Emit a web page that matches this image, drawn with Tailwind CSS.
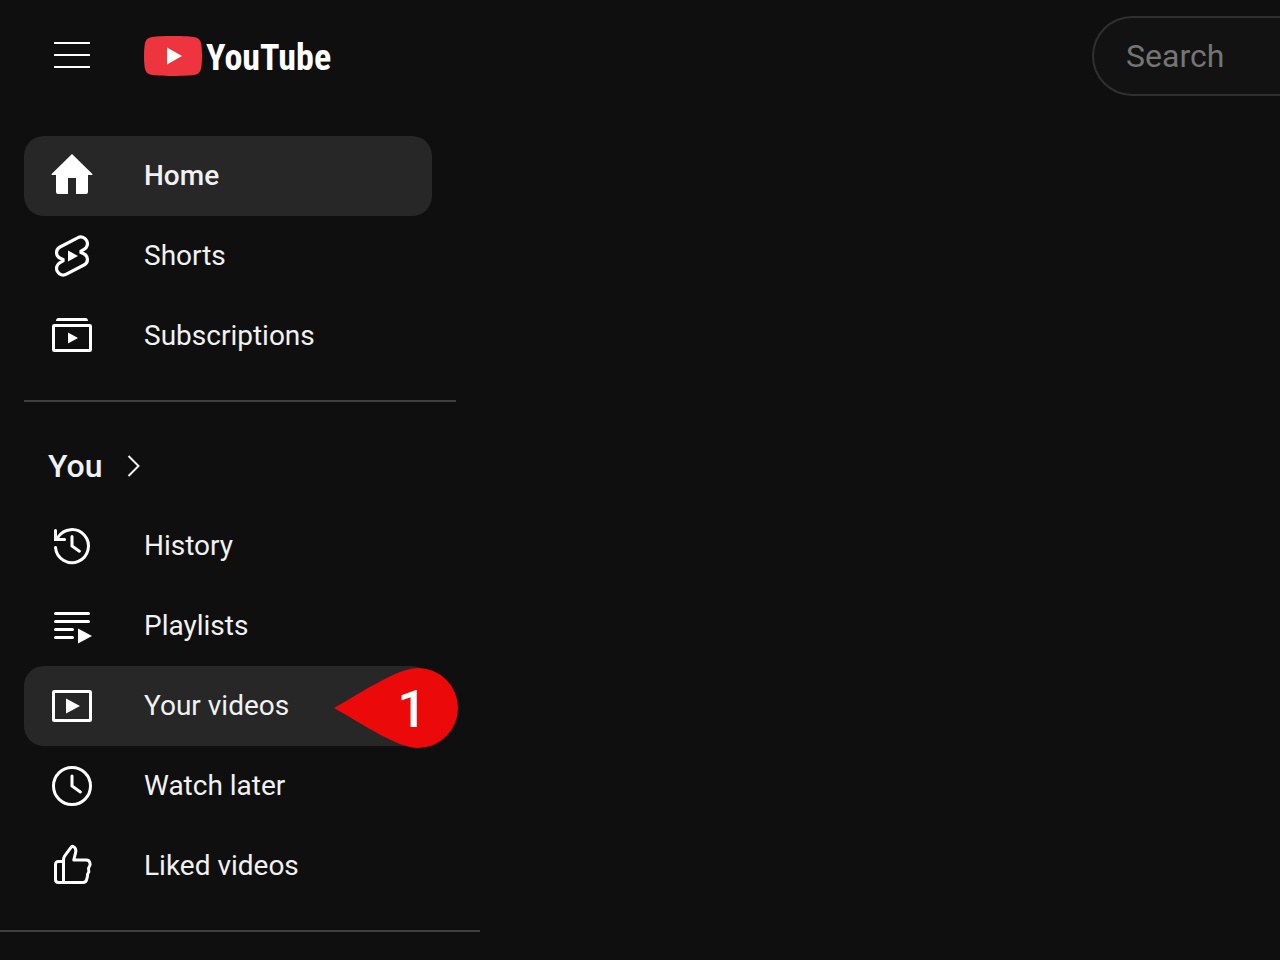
<!DOCTYPE html>
<html lang="en">
<head>
    <meta charset="UTF-8">
    <meta name="viewport" content="width=device-width, initial-scale=1.0">
    <title>YouTube</title>
    <script src="https://cdn.jsdelivr.net/npm/@tailwindcss/browser@4"></script>
</head>
<body class="min-h-screen bg-[#0f0f0f] font-['Roboto',sans-serif] text-[#f1f1f1] overflow-x-hidden">
    <header class="flex h-28 items-center justify-between">
        <div class="flex items-center gap-12 pl-12">
            <button type="button" aria-label="Menu" class="size-12">
                <svg class="size-12" viewBox="0 0 48 48" fill="#fff"><path d="M6 10h36v2H6zM6 22h36v2H6zM6 34h36v2H6z"/></svg>
            </button>
            <a href="#" class="flex items-center gap-1 text-white">
                <svg class="h-10 w-[58px]" viewBox="0 0 58 40">
                    <path fill="#ed343f" d="M29 0C40 0 48 .5 51 1.2 54.500 2 56.300 4 57 7c.7 3.500 1 8 1 13s-.3 9.500-1 13c-.7 3-2.500 5-6 5.800C48 39.500 40 40 29 40S10 39.500 7 38.800C3.500 38 1.700 36 1 33 .3 29.500 0 25 0 20S.3 10.500 1 7c.7-3 2.500-5 6-5.800C10 .5 18 0 29 0z"/>
                    <path fill="#fff" d="M23 11.500 38 20 23 28.500z"/>
                </svg>
                <span class="pt-1 font-['Roboto_Condensed','Liberation_Sans_Narrow',sans-serif] text-[36px] leading-10 font-bold">YouTube</span>
            </a>
        </div>
        <form>
            <input type="search" aria-label="Search" placeholder="Search" class="h-20 w-[188px] rounded-l-full border-2 border-r-0 border-[#303030] bg-[#121212] pl-8 text-[32px] outline-none placeholder:text-[#757575]">
        </form>
    </header>

    <nav class="w-[480px] border-b-2 border-[#3f3f3f] py-6 text-[28px] leading-10">
        <ul>
            <li class="pr-12 pl-6">
                <a href="#" class="flex h-20 items-center gap-12 rounded-[20px] bg-[#272727] pl-6 font-medium">
                    <svg class="size-12" viewBox="0 0 24 24" fill="#fff"><path d="M12 1 22.200 11a.3.3 0 0 1-.2.500H20V20a1 1 0 0 1-1 1h-5v-8h-4v8H5a1 1 0 0 1-1-1v-8.500H2a.3.3 0 0 1-.2-.5z"/></svg>
                    Home
                </a>
            </li>
            <li class="pr-12 pl-6">
                <a href="#" class="flex h-20 items-center gap-12 rounded-[20px] pl-6">
                    <svg class="size-12" viewBox="0 0 24 24" fill="none" stroke="#fff" stroke-width="1.6">
                        <path d="M6 7.500 14.800 2.900A3.300 3.300 0 0 1 18 8.700L16.500 9.600v.6L17.900 10.900A3.100 3.100 0 0 1 18 16.500L9.200 21.100A3.300 3.300 0 0 1 6 15.300L7.500 14.400v-.6L6.100 13.100A3.100 3.100 0 0 1 6 7.500z"/>
                        <path fill="#fff" stroke="none" d="m10 9.200 5 2.800-5 2.800z"/>
                    </svg>
                    Shorts
                </a>
            </li>
            <li class="pr-12 pl-6">
                <a href="#" class="flex h-20 items-center gap-12 rounded-[20px] pl-6">
                    <svg class="size-12" viewBox="0 0 24 24" fill="none" stroke="#fff" stroke-width="1.5" stroke-linejoin="round">
                        <rect x="2.750" y="6.750" width="18.500" height="12.500" rx=".4"/>
                        <path fill="#fff" stroke="none" d="M4 4.500C4 3.500 4.500 3 5.200 3h13.600c.7 0 1.200.5 1.200 1.500zM10 10.300l5 2.700-5 2.700z"/>
                    </svg>
                    Subscriptions
                </a>
            </li>
        </ul>

        <hr class="mx-6 my-6 border-t-2 border-[#3f3f3f]">

        <a href="#" class="flex h-20 items-center gap-2 pl-12 text-[32px] font-medium">
            You
            <svg class="size-12" viewBox="0 0 48 48" fill="none" stroke="#f1f1f1" stroke-width="2"><path d="m18.500 14 10 10-10 10"/></svg>
        </a>
        <ul>
            <li class="pr-12 pl-6">
                <a href="#" class="flex h-20 items-center gap-12 rounded-[20px] pl-6">
                    <svg class="size-12" viewBox="0 0 24 24" fill="none" stroke="#fff" stroke-width="1.5" stroke-linecap="round">
                        <path d="M3.750 12.700A8.250 8.250 0 1 0 4.900 7.800L4 8.750M3.750 4.200v4.550H8.300M12 7.300V12l3.700 2.600"/>
                    </svg>
                    History
                </a>
            </li>
            <li class="pr-12 pl-6">
                <a href="#" class="flex h-20 items-center gap-12 rounded-[20px] pl-6">
                    <svg class="size-12" viewBox="0 0 24 24" fill="none" stroke="#fff" stroke-width="1.5" stroke-linecap="round">
                        <path d="M3.750 5.750h16.500M3.750 9.750h16.500M3.750 13.750h8.500M3.750 17.750h8.500"/>
                        <path fill="#fff" stroke="none" d="m15 13.300 7 3.700-7 3.700z"/>
                    </svg>
                    Playlists
                </a>
            </li>
            <li class="relative pr-12 pl-6">
                <a href="#" class="flex h-20 items-center gap-12 rounded-[20px] bg-[#272727] pl-6">
                    <svg class="size-12" viewBox="0 0 24 24" fill="none" stroke="#fff" stroke-width="1.5" stroke-linejoin="round">
                        <rect x="2.750" y="4.750" width="18.500" height="14.500" rx=".4"/>
                        <path fill="#fff" stroke="none" d="m9 8.200 7 3.800-7 3.800z"/>
                    </svg>
                    Your videos
                </a>
                <!-- step marker pointing at the row -->
                <div class="absolute top-0.5 left-[334px] h-20 w-[124px]">
                    <svg class="absolute inset-0" width="124" height="80" viewBox="0 0 124 80"><path fill="#eb0909" d="M0 40C30 23 64 0 84 0a40 40 0 0 1 0 80C64 80 30 57 0 40z"/></svg>
                    <span class="relative flex h-20 items-center justify-center pt-1 pl-8 text-[52px] font-medium text-white">1</span>
                </div>
            </li>
            <li class="pr-12 pl-6">
                <a href="#" class="flex h-20 items-center gap-12 rounded-[20px] pl-6">
                    <svg class="size-12" viewBox="0 0 24 24" fill="none" stroke="#fff" stroke-width="1.5" stroke-linecap="round">
                        <circle cx="12" cy="12" r="9.250"/>
                        <path d="M12 7v5l4.200 3"/>
                    </svg>
                    Watch later
                </a>
            </li>
            <li class="pr-12 pl-6">
                <a href="#" class="flex h-20 items-center gap-12 rounded-[20px] pl-6">
                    <svg class="size-12" viewBox="0 0 24 24" fill="none" stroke="#fff" stroke-width="1.5" stroke-linejoin="round">
                        <path d="M7.750 9.750H5.200c-.9 0-1.450.6-1.450 1.450v7.600c0 .9.6 1.450 1.450 1.450h12.300c1 0 1.600-.5 1.800-1.400l.4-1.500c.1-.5-.1-1 .2-1.500.6-.7.7-1.300.4-2-.2-.5-.1-.9.300-1.400.5-.6.6-1.300.4-1.900-.2-1-.9-1.600-1.900-1.600h-6.200l.9-3.600c.3-1.300-.2-2.600-1.200-3.100-.4-.2-.8-.1-1 .3L8.200 7.200c-.35.6-.45 1.200-.45 1.800z"/>
                        <path d="M7.750 9.500v10.750"/>
                    </svg>
                    Liked videos
                </a>
            </li>
        </ul>
    </nav>
</body>
</html>
